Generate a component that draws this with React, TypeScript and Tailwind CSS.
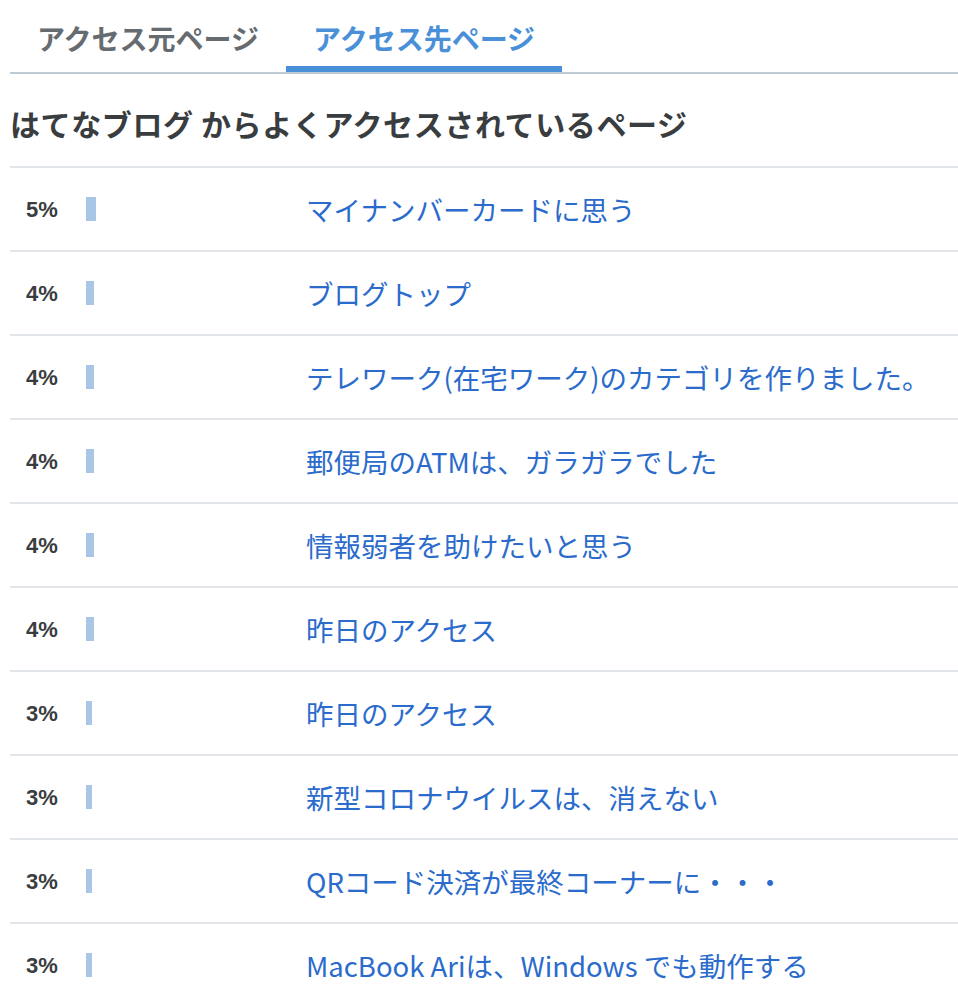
const rows = [
  { pct: 5, title: 'マイナンバーカードに思う' },
  { pct: 4, title: 'ブログトップ' },
  { pct: 4, title: 'テレワーク(在宅ワーク)のカテゴリを作りました。' },
  { pct: 4, title: '郵便局のATMは、ガラガラでした' },
  { pct: 4, title: '情報弱者を助けたいと思う' },
  { pct: 4, title: '昨日のアクセス' },
  { pct: 3, title: '昨日のアクセス' },
  { pct: 3, title: '新型コロナウイルスは、消えない' },
  { pct: 3, title: 'QRコード決済が最終コーナーに・・・' },
  { pct: 3, title: 'MacBook Ariは、Windows でも動作する' },
]

const jp = "font-['Noto_Sans_CJK_JP',sans-serif]"

export default function App() {
  return (
    <div className={`bg-white min-h-screen pl-[10px] ${jp}`}>
      {/* Tabs */}
      <div className="flex border-b-2 border-[#bfcbd3]">
        <button className="pl-[27px] pr-[27px] pt-[20px] pb-[10px] border-b-[6px] border-transparent text-[28px] leading-[36px] font-bold text-[#666b70]">
          アクセス元ページ
        </button>
        <button className="px-[27px] pt-[20px] pb-[10px] border-b-[6px] border-[#4a90d9] text-[28px] leading-[36px] font-bold text-[#4a90d9]">
          アクセス先ページ
        </button>
      </div>

      <h2 className="pt-[28px] pb-[22px] text-[30px] leading-[42px] tracking-[0.6px] font-bold text-[#3a3d40]">
        はてなブログ からよくアクセスされているページ
      </h2>

      <ul>
        {rows.map((r, i) => (
          <li key={i} className="flex items-center h-[84px] border-t-2 border-[#e2e6ea]">
            <span className="w-[76px] pl-[16px] font-['Liberation_Sans',sans-serif] font-bold text-[22px] text-[#3a3d40]">
              {r.pct}%
            </span>
            <span className="w-[220px] flex">
              <span className="h-[24px] bg-[#aac6e6]" style={{ width: r.pct * 2 }} />
            </span>
            <a href="#" className="text-[27.5px] leading-[36px] text-[#2a6bcc] whitespace-nowrap">
              {r.title}
            </a>
          </li>
        ))}
      </ul>
    </div>
  )
}
